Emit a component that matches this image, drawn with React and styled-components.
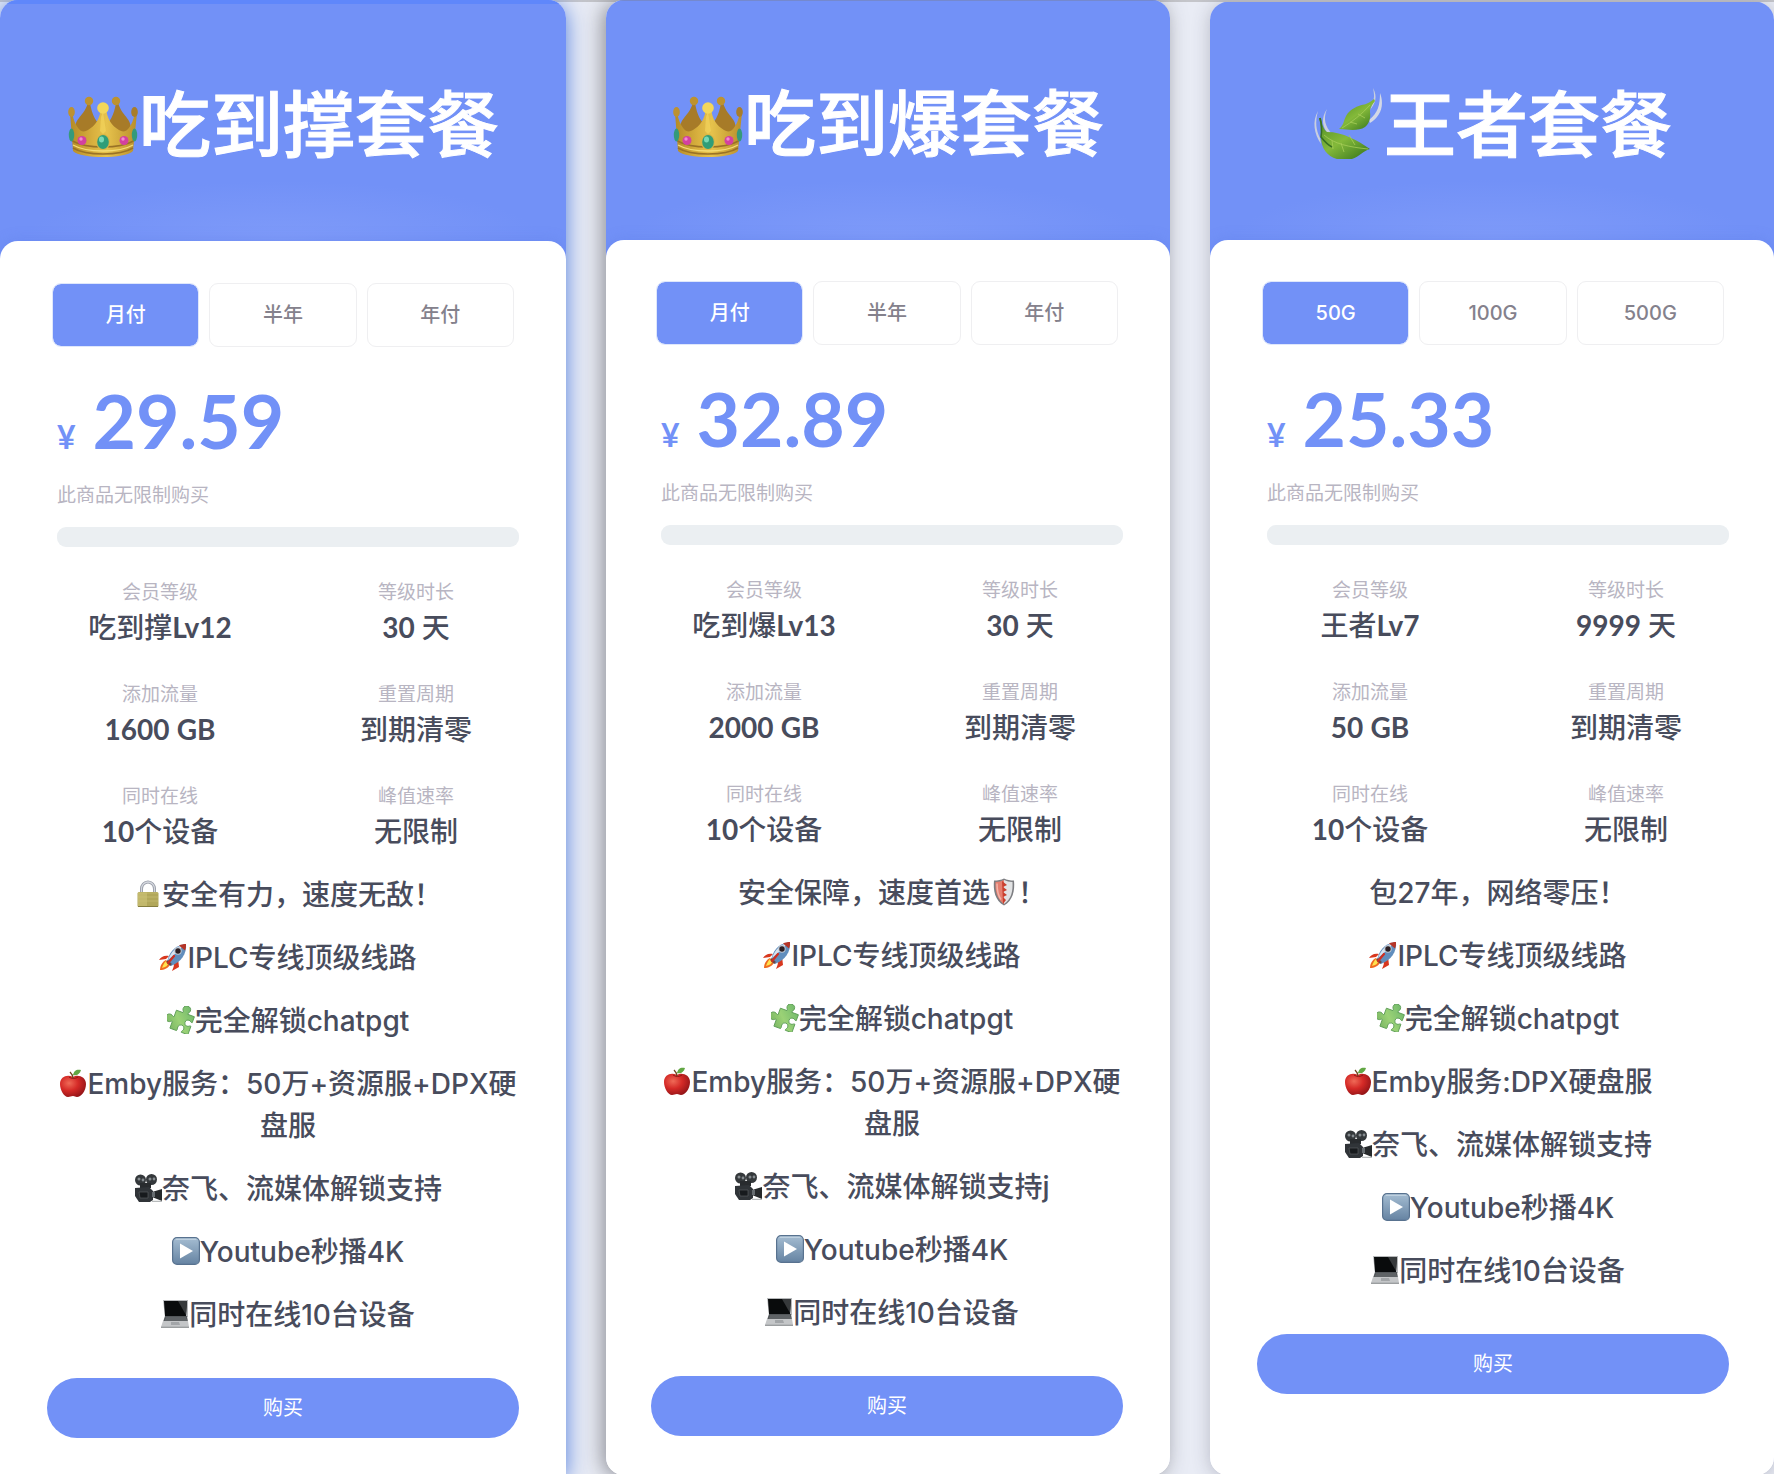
import React, { useState } from "react";
import styled, { createGlobalStyle, css } from "styled-components";

const blue = "#7291f7";
const ink = "#484c5c";
const muted = "#b8b5c2";

const GlobalStyle = createGlobalStyle`
  *, *::before, *::after { box-sizing: border-box; }
  body {
    margin: 0;
    background: #e9ecf5;
    font-family: Inter, "Noto Sans CJK SC", sans-serif;
    color: ${ink};
  }
  h2, p, dl, dt, dd, ul { margin: 0; padding: 0; }
`;

const Page = styled.main`
  display: grid;
  grid-template-columns: 566fr 564fr 564fr;
  gap: 40px;
  min-height: 100vh;
  overflow: hidden;
  background: linear-gradient(#c4c5ca 2px, transparent 2px);
`;

const tones = {
  blue: css`
    border-radius: 18px 18px 0 0;
    box-shadow: 0 4px 22px rgb(82, 126, 222);
  `,
  grey: css`
    border-radius: 18px;
    box-shadow: -4px 2px 20px rgba(60, 60, 66, 0.5);
  `,
  soft: css`
    margin-top: 2px;
    border-radius: 18px;
    box-shadow: 0 2px 18px rgba(70, 70, 90, 0.3);
  `,
};

const Card = styled.article`
  display: flex;
  flex-direction: column;
  min-width: 0;
  overflow: hidden;
  background: #fff;
  ${(p) => tones[p.$tone]}
`;

const Header = styled.header`
  display: flex;
  align-items: center;
  justify-content: center;
  height: ${(p) => p.$height + 18}px;
  padding-bottom: 10px;
  background:
    linear-gradient(${(p) => p.$edge}, ${(p) => p.$edge}) top / 100% ${(p) => p.$edgeSize}px no-repeat,
    radial-gradient(ellipse 46% 60px at 50% ${(p) => p.$height}px, #7f9bf9, rgba(127, 155, 249, 0)),
    ${blue};
`;

const Title = styled.h2`
  color: #fff;
  font-size: 72px;
  line-height: 108px;
  font-weight: 500;
  white-space: nowrap;
  -webkit-text-stroke: 1px #fff;
`;

const Body = styled.div`
  flex: 1;
  margin-top: -18px;
  padding: ${(p) => p.$top}px ${(p) => p.$right}px 37px ${(p) => p.$left}px;
  border-radius: 18px 18px 0 0;
  background: #fff;
  box-shadow: 0 0 14px rgba(90, 120, 230, 0.35);
`;

const Tabs = styled.div`
  display: grid;
  grid-template-columns: repeat(3, 1fr);
  gap: 10px;
  padding: 0 5px;
`;

const Tab = styled.button`
  height: 64px;
  padding: 0;
  border: 1px solid ${(p) => (p.$active ? "#dfe7fb" : "#efeff1")};
  border-radius: 9px;
  background: ${(p) => (p.$active ? blue : "#fff")};
  background-clip: padding-box;
  color: ${(p) => (p.$active ? "#fff" : "#84818c")};
  font: 500 20px/30px Inter, "Noto Sans CJK SC", sans-serif;
  cursor: pointer;
`;

const Details = styled.div`
  padding-left: 10px;
`;

const Price = styled.p`
  display: flex;
  align-items: baseline;
  gap: 17px;
  margin-top: 25px;
  color: ${blue};
  font-family: Lato, sans-serif;
  font-size: 75px;
  line-height: 96px;
  font-weight: 700;
`;

const Currency = styled.span`
  font-size: 32px;
  line-height: 40px;
`;

const Limit = styled.p`
  margin-top: 13px;
  color: ${muted};
  font-size: 19px;
  line-height: 30px;
`;

const Progress = styled.div`
  height: 20px;
  margin-top: 16px;
  border-radius: 9px;
  background: #ebeff2;
`;

const Stats = styled.dl`
  display: grid;
  grid-template-columns: 1fr 1fr;
  row-gap: 33px;
  margin: 32px -25px 0;
  text-align: center;
`;

const StatLabel = styled.dt`
  color: ${muted};
  font-size: 19px;
  line-height: 27px;
`;

const StatValue = styled.dd`
  font-family: Lato, "Noto Sans CJK SC", sans-serif;
  font-size: 28px;
  line-height: 42px;
  font-weight: 500;
`;

const Features = styled.ul`
  display: flex;
  flex-direction: column;
  gap: 21px;
  margin-top: 22px;
  list-style: none;
  text-align: center;
  font-size: 28px;
  line-height: 42px;
  font-weight: 500;
`;

const Strong = styled.span`
  font-weight: 700;
`;

const Buy = styled.button`
  display: block;
  width: 100%;
  height: 60px;
  margin-top: 42px;
  padding: 0;
  border: 0;
  border-radius: 30px;
  background: ${blue};
  color: #fff;
  font: 400 20px/30px Inter, "Noto Sans CJK SC", sans-serif;
  cursor: pointer;
`;

const Glyph = styled.svg`
  width: 1em;
  height: 1em;
  vertical-align: -0.11em;
`;

const Crown = () => (
  <Glyph viewBox="0 0 72 72" aria-hidden="true">
    <defs>
      <linearGradient id="crownGold" x1="0" x2="1">
        <stop offset="0" stopColor="#b48a26" />
        <stop offset=".35" stopColor="#d9b13f" />
        <stop offset=".55" stopColor="#e6c24c" />
        <stop offset="1" stopColor="#b98e2b" />
      </linearGradient>
    </defs>
    <path d="M8 48C7 30 15 34 21 17h2c2 12 6 20 13 24 7-4 11-12 13-24h2c6 17 14 13 13 31z" fill="#a77b28" />
    <circle cx="22" cy="15" r="4.2" fill="#bd922f" /><circle cx="49" cy="15" r="4.2" fill="#bd922f" />
    <path d="M3 27h2c4 17 10 21 16 17 7-4 12-11 13-22h5c1 11 6 18 13 22 6 4 12 0 16-17h2l-4 38c-8 8-52 8-60 0z" fill="url(#crownGold)" />
    <path d="M5.500 55c14 8 47 8 61 0M6 62c13 8 47 8 60 0" fill="none" stroke="#997226" strokeWidth="1.500" />
    <path d="M6 59c14 8 46 8 60 0" fill="none" stroke="#f4dd75" strokeWidth="1.300" />
    <ellipse cx="4.500" cy="26" rx="3.300" ry="5" fill="#bd9130" /><ellipse cx="67.500" cy="26" rx="3.300" ry="5" fill="#a87d2b" />
    <circle cx="36" cy="22" r="5.800" fill="#f3d75a" />
    <path d="M34 31l2-5 3 19-3 3-3-3z" fill="#f4d65d" opacity=".65" />
    <ellipse cx="36" cy="56" rx="7" ry="8" fill="#d9b546" /><ellipse cx="36" cy="56" rx="5.800" ry="7" fill="#2f9d78" />
    <ellipse cx="34.500" cy="53.500" rx="2.500" ry="3" fill="#77d8b5" />
    <circle cx="15" cy="54.500" r="4.500" fill="#d3409f" /><circle cx="57" cy="54.500" r="4.500" fill="#d3409f" />
    <circle cx="14" cy="53" r="1.700" fill="#f18bd0" /><circle cx="56" cy="53" r="1.700" fill="#f18bd0" />
    <ellipse cx="4.500" cy="49" rx="2.700" ry="6.500" fill="#349a7a" /><ellipse cx="67.500" cy="49" rx="2.700" ry="6.500" fill="#349a7a" />
  </Glyph>
);

const Leaves = () => (
  <Glyph viewBox="0 0 72 72" aria-hidden="true">
    <defs>
      <linearGradient id="leafGreen" x1="0" y1="0" x2=".8" y2="1">
        <stop offset="0" stopColor="#4f8c25" />
        <stop offset=".55" stopColor="#84b93a" />
        <stop offset="1" stopColor="#3f7d20" />
      </linearGradient>
    </defs>
    <path d="M6 24C0 34 2 47 9 57L8 51C4 43 3 35 6 24z" fill="#c9cfdf" />
    <path d="M15 22c-4 10-2 17 5 25h-4c-6-8-7-16-1-25zM61 1c5 9 2 16-3 22 4-9 5-13 3-22z" fill="#c9cfdf" />
    <path d="M68 6c5 13 0 24-10 30l-1-3c9-7 11-15 11-27z" fill="#d3d8e6" />
    <path d="M7 31h2c1 7 3 12 6 14 16 0 30 8 43 17-8 2-12 10-23 11C20 74 9 65 9 50c0-7 0-12-2-19z" fill="url(#leafGreen)" />
    <path d="M27 42c6-4 4-12 11-18 6-5 12-6 16-7 4-2 6-3 8-5l1 2c-3 4-5 6-5 11 1 6-1 12-5 15-6 4-15 3-26 2z" fill="url(#leafGreen)" />
    <path d="M12 48c10 9 25 12 44 14M20 53l1 9m8-6l3 9m5-17l6 10M30 41c10-6 20-14 28-23M38 35l7 2m1-10l7 4" fill="none" stroke="#a6cd58" strokeWidth=".8" />
    <path d="M8 31c2 7 2 12 1 19 4 5 7 8 11 10" fill="none" stroke="#376f21" strokeWidth="1.600" />
  </Glyph>
);

const Lock = () => (
  <Glyph viewBox="0 0 28 28" aria-hidden="true">
    <path d="M7.500 14V9a6.500 7 0 0113 0v5" fill="none" stroke="#959aa5" strokeWidth="3" />
    <path d="M7.500 14V9a6.500 7 0 0113 0v5" fill="none" stroke="#d5d8df" strokeWidth="1.300" />
    <rect x="3.500" y="12" width="21" height="15" rx="1.500" fill="#b1a75a" />
    <rect x="4" y="12.500" width="9" height="14" fill="#c9bf73" opacity=".7" />
    <path d="M4 13h20M4 17h20M4 21h20" stroke="#cdc47a" strokeWidth=".6" />
    <path d="M4 26.500h20" stroke="#857d3d" />
  </Glyph>
);

const Rocket = () => (
  <Glyph viewBox="0 0 28 28" aria-hidden="true">
    <path d="M10 13C5 12 2 14 0 17l7-1zM14 18c2 5 0 7-1 10l7-4-1-9z" fill="#d8371e" />
    <path d="M7 17C3 19 1 23 1 27c4 0 9-2 10-6z" fill="#ef6b20" />
    <path d="M7 18c-2 2-3 4-4 7 4-1 5-2 6-4z" fill="#ffe34e" />
    <path d="M8 20C9 11 15 2 27 1c1 10-5 18-15 22z" fill="#618ebd" />
    <path d="M9 17C12 9 17 3 25 2 19 8 14 13 9 17z" fill="#d7e4f0" />
    <path d="M20 2.500C22 1.500 24.500 1 27 1c.2 2.500-.2 4.500-1 6.500z" fill="#b63527" />
    <circle cx="19" cy="8" r="3.700" fill="#bdc6d1" /><circle cx="19" cy="8" r="2.700" fill="#2c2025" />
    <path d="M8 18l4 4" stroke="#6f4541" strokeWidth="2.500" /><path d="M9 20l6-7" stroke="#cf2f20" strokeWidth="2.200" strokeLinecap="round" />
  </Glyph>
);

const Puzzle = () => (
  <Glyph viewBox="1 2 22 22" aria-hidden="true">
    <defs>
      <linearGradient id="puzzleGreen" x1="1" y1="0" x2="0" y2="1">
        <stop offset="0" stopColor="#68b46a" /><stop offset=".55" stopColor="#9bd276" /><stop offset="1" stopColor="#6fac5d" />
      </linearGradient>
    </defs>
    <path
      d="M6 7h5.500c.5-1-1-1.500-1-3a3 3 0 016 0c0 1.500-1.500 2-1 3H21v5c-1 .5-1.500-1-3-1a2.500 2.500 0 000 5c1.500 0 2-1.500 3-1v7h-5.500c-.5-1 1-1.500 1-3a2.500 2.500 0 00-5 0c0 1.500.5 2 0 3H6v-5.500c-1-.5-1.500 1-3 1a3 3 0 010-6c1.500 0 2 1.500 3 1z"
      transform="rotate(20 12 13)"
      fill="url(#puzzleGreen)"
      stroke="#5f9e58"
      strokeWidth=".7"
    />
  </Glyph>
);

const Apple = () => (
  <Glyph viewBox="0 0 28 28" aria-hidden="true">
    <defs>
      <radialGradient id="appleRed" cx=".35" cy=".35" r=".7">
        <stop offset="0" stopColor="#ef6a57" /><stop offset=".5" stopColor="#d52a27" /><stop offset="1" stopColor="#951518" />
      </radialGradient>
    </defs>
    <path d="M14 8c4-3 13-1 13 7 0 7-5 13-9 13-2 0-2-1-4-1s-3 1-5 1c-4 0-8-7-8-13C1 7 9 5 14 8z" fill="url(#appleRed)" />
    <path d="M10 8c3 2 6 2 9 0" fill="none" stroke="#8d1718" />
    <path d="M14 9c0-3-1-4-3-6" stroke="#704720" strokeWidth="1.300" fill="none" />
    <path d="M14 6c1-5 4-6 8-5-1 4-4 6-8 5z" fill="#62a744" />
  </Glyph>
);

const Camera = () => (
  <Glyph viewBox="0 0 28 28" aria-hidden="true">
    <circle cx="6.500" cy="6" r="5.500" fill="#34383b" /><circle cx="17.500" cy="5.500" r="5.500" fill="#34383b" />
    <circle cx="5" cy="5" r="1.500" fill="#858b8f" /><circle cx="9" cy="6" r="1.400" fill="#858b8f" />
    <circle cx="16" cy="5" r="1.500" fill="#858b8f" /><circle cx="20" cy="5" r="1.400" fill="#858b8f" />
    <rect x="6" y="9" width="11" height="5" fill="#282b2e" />
    <path d="M1 14l14-1 4 4v9l-3 2H5l-4-6z" fill="#303438" />
    <path d="M18 18l10-3v12l-10-4z" fill="#26292b" /><path d="M18 18h3v5h-3z" fill="#666c70" />
    <path d="M5 18h9v6H6z" fill="#171a1d" stroke="#5e6367" strokeWidth=".6" />
    <path d="M18 27.300h10" stroke="#a5a9ab" />
  </Glyph>
);

const Play = () => (
  <Glyph viewBox="0 0 28 28" aria-hidden="true">
    <defs>
      <linearGradient id="playBlue" x2="0" y2="1">
        <stop offset="0" stopColor="#a5bdd2" /><stop offset="1" stopColor="#6583a2" />
      </linearGradient>
    </defs>
    <rect x=".6" y=".6" width="26.800" height="26.800" rx="4.500" fill="url(#playBlue)" stroke="#58728f" strokeWidth="1.200" />
    <path d="M4 2.200h20" stroke="#cbdbe7" strokeLinecap="round" />
    <path d="M8 6.500v15L21 14z" fill="#fff" />
  </Glyph>
);

const Laptop = () => (
  <Glyph viewBox="0 0 28 28" aria-hidden="true">
    <path d="M2 0h25v17H4z" fill="#b6b8ba" /><path d="M3 1h23l-1 15H4z" fill="#090b0c" />
    <path d="M17 1h9l-1 14z" fill="#36393b" />
    <path d="M4 16h22l1 6H2z" fill="#53575a" /><path d="M5 18h20M4 20h22" stroke="#858a8d" strokeWidth=".5" />
    <path d="M2 21h25l1 6H0z" fill="#c4c6c8" /><path d="M10 22h8l1 3h-9z" fill="#a2a5a8" />
    <path d="M0 27.300h28" stroke="#909396" strokeWidth="1.200" />
  </Glyph>
);

const Shield = () => (
  <Glyph viewBox="0 0 28 28" aria-hidden="true">
    <path d="M14 .5c3 1.500 6 2 10 2 1 10-1 20-10 25C5 23 3 12 4 2.500c4 0 7-.5 10-2z" fill="#7d7e82" />
    <path d="M14 2c3 1.300 5 2 8.500 2 .5 9-1 17-8.500 22z" fill="#e2e3e4" />
    <path d="M14 2C11 3.300 9 4 5.500 4 5 13 7 21 14 26z" fill="#e57f70" />
    <path d="M12 3l5 4-4 2 4 3-4 2 4 3-4 2 3 3-3 4z" fill="#c9402f" />
    <path d="M7 5.500c0 7 1 12 4 16" fill="none" stroke="#f3b4a9" strokeWidth="1.500" />
  </Glyph>
);

const plans = [
  {
    title: "吃到撑套餐", Icon: Crown,
    tone: "blue", edge: "#5f87fb", edgeSize: 4, head: 241, top: 42, left: 47, right: 47,
    tabs: ["月付", "半年", "年付"],
    price: "29.59",
    stats: [["会员等级", "吃到撑Lv12"], ["等级时长", "30 天"], ["添加流量", "1600 GB"], ["重置周期", "到期清零"], ["同时在线", "10个设备"], ["峰值速率", "无限制"]],
    features: [[Lock, "安全有力，速度无敌！"], [Rocket, "IPLC专线顶级线路"], [Puzzle, "完全解锁chatpgt"], [Apple, "Emby服务：50万+资源服+DPX硬盘服"], [Camera, "奈飞、流媒体解锁支持"], [Play, "Youtube秒播4K"], [Laptop, "同时在线10台设备"]],
  },
  {
    title: "吃到爆套餐", Icon: Crown,
    tone: "grey", edge: "#7589cd", edgeSize: 1, head: 240, top: 41, left: 45, right: 47,
    tabs: ["月付", "半年", "年付"],
    price: "32.89",
    stats: [["会员等级", "吃到爆Lv13"], ["等级时长", "30 天"], ["添加流量", "2000 GB"], ["重置周期", "到期清零"], ["同时在线", "10个设备"], ["峰值速率", "无限制"]],
    features: [[null, "安全保障，速度首选", Shield, "！"], [Rocket, "IPLC专线顶级线路"], [Puzzle, "完全解锁chatpgt"], [Apple, "Emby服务：50万+资源服+DPX硬盘服"], [Camera, "奈飞、流媒体解锁支持j"], [Play, "Youtube秒播4K"], [Laptop, "同时在线10台设备"]],
  },
  {
    title: "王者套餐", Icon: Leaves,
    tone: "soft", edge: blue, edgeSize: 1, head: 238, top: 41, left: 47, right: 45,
    tabs: ["50G", "100G", "500G"],
    price: "25.33",
    stats: [["会员等级", "王者Lv7"], ["等级时长", "9999 天"], ["添加流量", "50 GB"], ["重置周期", "到期清零"], ["同时在线", "10个设备"], ["峰值速率", "无限制"]],
    features: [[null, "包27年，网络零压！"], [Rocket, "IPLC专线顶级线路"], [Puzzle, "完全解锁chatpgt"], [Apple, "Emby服务:DPX硬盘服"], [Camera, "奈飞、流媒体解锁支持"], [Play, "Youtube秒播4K"], [Laptop, "同时在线10台设备"]],
  },
];

// Latin letters and digits are set heavier than the Chinese text around them.
const Mixed = ({ text }) =>
  text.split(/([\x21-\x7e]+)/).map((part, i) => (i % 2 ? <Strong key={i}>{part}</Strong> : part));

function PlanCard({ plan }) {
  const [active, setActive] = useState(0);
  return (
    <Card $tone={plan.tone}>
      <Header $height={plan.head} $edge={plan.edge} $edgeSize={plan.edgeSize}>
        <Title><plan.Icon />{plan.title}</Title>
      </Header>
      <Body $top={plan.top} $left={plan.left} $right={plan.right}>
        <Tabs>
          {plan.tabs.map((name, i) => (
            <Tab key={name} type="button" aria-pressed={i === active} $active={i === active} onClick={() => setActive(i)}>
              {name}
            </Tab>
          ))}
        </Tabs>
        <Details>
          <Price><Currency>¥</Currency>{plan.price}</Price>
          <Limit>此商品无限制购买</Limit>
          <Progress />
          <Stats>
            {plan.stats.map(([label, value]) => (
              <div key={label}>
                <StatLabel>{label}</StatLabel>
                <StatValue><Mixed text={value} /></StatValue>
              </div>
            ))}
          </Stats>
          <Features>
            {plan.features.map(([Icon, text, EndIcon, tail]) => (
              <li key={text}>
                {Icon && <Icon />}
                {text}
                {EndIcon && <EndIcon />}
                {tail}
              </li>
            ))}
          </Features>
        </Details>
        <Buy type="button">购买</Buy>
      </Body>
    </Card>
  );
}

export default function App() {
  return (
    <>
      <GlobalStyle />
      <Page>
        {plans.map((plan) => <PlanCard key={plan.price} plan={plan} />)}
      </Page>
    </>
  );
}
